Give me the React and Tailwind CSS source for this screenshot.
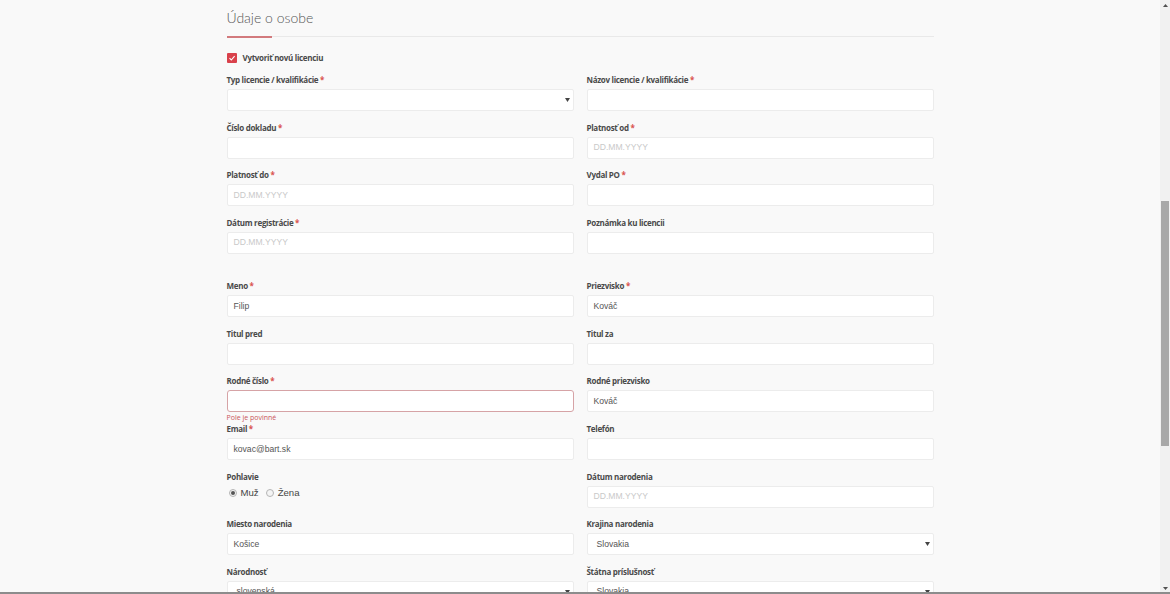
import React from "react";

const labelCls =
  "block h-[12px] leading-[12px] text-[8px] font-bold tracking-[-0.3px] text-[#4a4a4a] whitespace-nowrap";
const inputBase =
  "mt-[3px] h-[22px] w-full bg-white rounded-[2px] border border-[#ececec] flex items-center text-[8.6px] text-[#555]";

function Label({ text, req }) {
  return (
    <span className={labelCls} style={{ fontFamily: '"Open Sans", sans-serif' }}>
      {text}
      {req && <span className="text-[#d9534f]"> *</span>}
    </span>
  );
}

function Field({ label, req, value, placeholder, select, error }) {
  return (
    <div className={error ? "" : "pb-[10.5px]"}>
      <Label text={label} req={req} />
      <div
        className={
          error
            ? "mt-[3px] h-[22px] w-full bg-white rounded-[3px] border border-[#d6a3a6] flex items-center text-[8.6px] text-[#555]"
            : inputBase
        }
        style={{ fontFamily: '"Liberation Sans", Arial, sans-serif' }}
      >
        {select ? (
          <>
            <span className="flex-1 pl-[9px]">{value}</span>
            <svg width="5" height="4" viewBox="0 0 5 4" className="mr-[3px]">
              <path d="M0 0 L5 0 L2.5 4 Z" fill="#444" />
            </svg>
          </>
        ) : value ? (
          <span className="pl-[6px]">{value}</span>
        ) : placeholder ? (
          <span className="pl-[6px] text-[#c9c9c9]">{placeholder}</span>
        ) : null}
      </div>
      {error && (
        <div
          className="mt-[1px] h-[10px] leading-[10px] text-[7px] text-[#c9565c]"
          style={{ fontFamily: '"Open Sans", sans-serif' }}
        >
          {error}
        </div>
      )}
    </div>
  );
}

function Radio({ checked, label }) {
  return (
    <div className="flex items-center gap-[4px]">
      <span className="w-[8px] h-[8px] rounded-full border border-[#b5b5b5] bg-[#f4f4f4] flex items-center justify-center">
        {checked && <span className="w-[4px] h-[4px] rounded-full bg-[#555]" />}
      </span>
      <span className="text-[9.6px] text-[#444]" style={{ fontFamily: '"Liberation Sans", Arial, sans-serif' }}>
        {label}
      </span>
    </div>
  );
}

export default function App() {
  return (
    <div className="flex h-[594px] overflow-hidden bg-[#f9f9f9]">
      <div className="flex-1 overflow-hidden">
        <div className="w-[707px] mx-auto pt-[8px]">
          <h2
            className="h-[20px] leading-[20px] text-[14px] font-light text-[#555]"
            style={{ fontFamily: 'Lato, "Open Sans", sans-serif' }}
          >
            Údaje o osobe
          </h2>
          <div className="mt-[8px] h-px bg-[#e9e9e9]">
            <div className="w-[45px] h-[1.5px] bg-[#d27a7d]" />
          </div>
          <div className="mt-[16px] flex items-center gap-[6px] h-[10px]">
            <span className="w-[10px] h-[10px] rounded-[1px] bg-[#d9414b] flex items-center justify-center">
              <svg width="8" height="8" viewBox="0 0 8 8">
                <path d="M1.5 4.2 L3.3 6 L6.6 2.2" stroke="white" strokeWidth="1.1" fill="none" />
              </svg>
            </span>
            <span className={labelCls} style={{ fontFamily: '"Open Sans", sans-serif' }}>
              Vytvoriť novú licenciu
            </span>
          </div>

          <div className="mt-[11px] grid grid-cols-2 gap-x-[13px]">
            <Field label="Typ licencie / kvalifikácie" req select value="" />
            <Field label="Názov licencie / kvalifikácie" req />
            <Field label="Číslo dokladu" req />
            <Field label="Platnosť od" req placeholder="DD.MM.YYYY" />
            <Field label="Platnosť do" req placeholder="DD.MM.YYYY" />
            <Field label="Vydal PO" req />
            <Field label="Dátum registrácie" req placeholder="DD.MM.YYYY" />
            <Field label="Poznámka ku licencii" />
          </div>

          <div className="mt-[16px] grid grid-cols-2 gap-x-[13px]">
            <Field label="Meno" req value="Filip" />
            <Field label="Priezvisko" req value="Kováč" />
            <Field label="Titul pred" />
            <Field label="Titul za" />
            <Field label="Rodné číslo" req error="Pole je povinné" />
            <Field label="Rodné priezvisko" value="Kováč" />
            <Field label="Email" req value="kovac@bart.sk" />
            <Field label="Telefón" />
            <div className="pb-[10.5px]">
              <Label text="Pohlavie" />
              <div className="mt-[3px] h-[16px] flex items-center gap-[7px] pl-[2px]">
                <Radio checked label="Muž" />
                <Radio label="Žena" />
              </div>
            </div>
            <Field label="Dátum narodenia" placeholder="DD.MM.YYYY" />
            <Field label="Miesto narodenia" value="Košice" />
            <Field label="Krajina narodenia" select value="Slovakia" />
            <Field label="Národnosť" select value="slovenská" />
            <Field label="Štátna príslušnosť" select value="Slovakia" />
          </div>
        </div>
      </div>
      <div className="w-[10px] h-full bg-[#f1f1f1] flex flex-col items-center">
        <div className="h-[10px] flex items-center justify-center">
          <svg width="5" height="3" viewBox="0 0 5 3">
            <path d="M0 3 L5 3 L2.5 0 Z" fill="#505050" />
          </svg>
        </div>
        <div className="h-[191px]" />
        <div className="w-[8px] h-[245px] bg-[#a8a8a8]" />
        <div className="flex-1" />
        <div className="h-[12px] flex items-center justify-center">
          <svg width="5" height="3" viewBox="0 0 5 3">
            <path d="M0 0 L5 0 L2.5 3 Z" fill="#505050" />
          </svg>
        </div>
      </div>
      <div className="fixed left-0 right-0 bottom-0 h-[2px] bg-[#8c8c8c]" />
    </div>
  );
}
